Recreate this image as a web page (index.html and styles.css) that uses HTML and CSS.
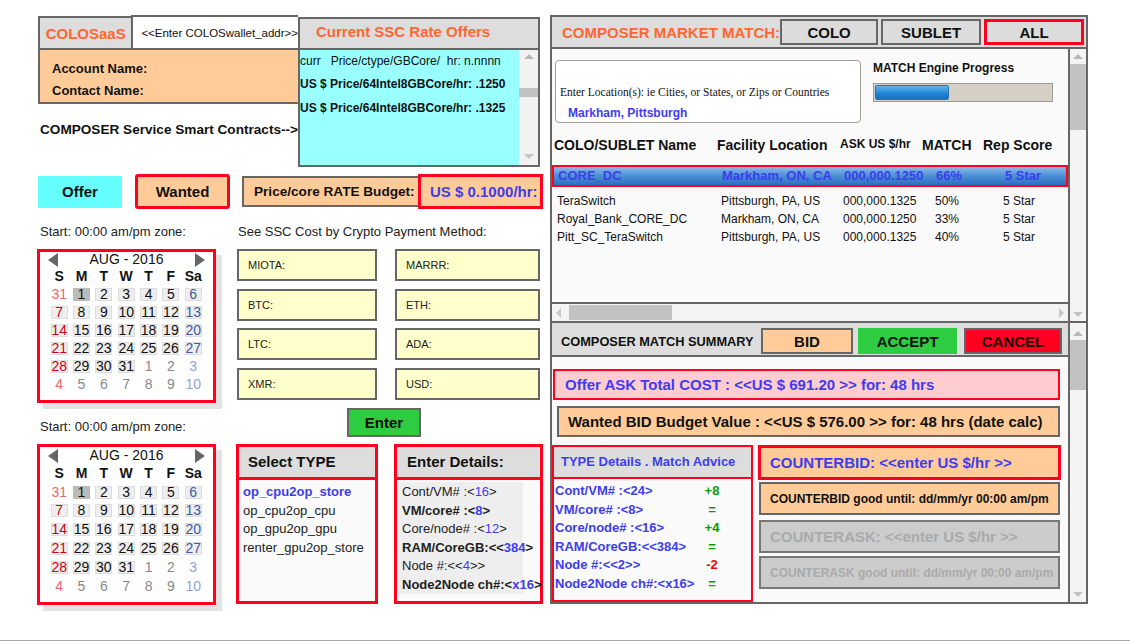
FILE: index.html
```html
<!DOCTYPE html>
<html lang="en">
<head>
<meta charset="utf-8">
<title>COLOSaaS Composer</title>
<link rel="stylesheet" href="styles.css">
</head>
<body>
<div class="page">
  <div class="left">
    <section class="row-top">
      <div class="acct">
        <div class="acct-head">
          <div class="brand">COLOSaaS</div>
          <div class="wallet">&lt;&lt;Enter COLOSwallet_addr&gt;&gt;</div>
        </div>
        <div class="acct-body">
          <div>Account Name:</div>
          <div>Contact Name:</div>
        </div>
        <div class="contracts">COMPOSER Service Smart Contracts--&gt;</div>
      </div>
      <div class="rates">
        <div class="rates-head">Current SSC Rate Offers</div>
        <div class="rates-body">
          <div class="rates-list">
            <div class="rate-line">curr   Price/ctype/GBCore/  hr: n.nnnn</div>
            <div class="rate-line strong">US $ Price/64Intel8GBCore/hr: .1250</div>
            <div class="rate-line strong">US $ Price/64Intel8GBCore/hr: .1325</div>
          </div>
          <div class="vscroll vs-rates">
            <span class="arr-up"></span>
            <span class="thumb"></span>
            <span class="arr-down"></span>
          </div>
        </div>
      </div>
    </section>

    <section class="row-mode">
      <div class="btn-offer">Offer</div>
      <div class="btn-wanted">Wanted</div>
      <div class="budget">
        <div class="budget-label">Price/core RATE Budget:</div>
        <div class="budget-value">US $ 0.1000/hr:</div>
      </div>
    </section>

    <section class="row-labels">
      <div class="lbl-start">Start: 00:00 am/pm zone:</div>
      <div>See SSC Cost by Crypto Payment Method:</div>
    </section>

    <section class="row-cal">
      <div class="cal">
        <div class="cal-head"><span class="tri-l"></span><span class="cal-title">AUG - 2016</span><span class="tri-r"></span></div>
        <div class="cal-grid">
          <span class="dn">S</span><span class="dn">M</span><span class="dn">T</span><span class="dn">W</span><span class="dn">T</span><span class="dn">F</span><span class="dn">Sa</span>
          <span class="d o su">31</span><span class="d today">1</span><span class="d b">2</span><span class="d b">3</span><span class="d b">4</span><span class="d b">5</span><span class="d b sa">6</span>
          <span class="d b su">7</span><span class="d b">8</span><span class="d b">9</span><span class="d b">10</span><span class="d b">11</span><span class="d b">12</span><span class="d b sa">13</span>
          <span class="d b su">14</span><span class="d b">15</span><span class="d b">16</span><span class="d b">17</span><span class="d b">18</span><span class="d b">19</span><span class="d b sa">20</span>
          <span class="d b su">21</span><span class="d b">22</span><span class="d b">23</span><span class="d b">24</span><span class="d b">25</span><span class="d b">26</span><span class="d b sa">27</span>
          <span class="d b su">28</span><span class="d b">29</span><span class="d b">30</span><span class="d b">31</span><span class="d o">1</span><span class="d o">2</span><span class="d o sa">3</span>
          <span class="d o su">4</span><span class="d o">5</span><span class="d o">6</span><span class="d o">7</span><span class="d o">8</span><span class="d o">9</span><span class="d o sa">10</span>
        </div>
      </div>
      <div class="crypto">
        <div class="coin">MIOTA:</div><div class="coin">MARRR:</div>
        <div class="coin">BTC:</div><div class="coin">ETH:</div>
        <div class="coin">LTC:</div><div class="coin">ADA:</div>
        <div class="coin">XMR:</div><div class="coin">USD:</div>
      </div>
    </section>

    <section class="row-enter">
      <div class="lbl-start2">Start: 00:00 am/pm zone:</div>
      <div class="btn-enter">Enter</div>
    </section>

    <section class="row-bottom">
      <div class="cal cal-lg">
        <div class="cal-head"><span class="tri-l"></span><span class="cal-title">AUG - 2016</span><span class="tri-r"></span></div>
        <div class="cal-grid">
          <span class="dn">S</span><span class="dn">M</span><span class="dn">T</span><span class="dn">W</span><span class="dn">T</span><span class="dn">F</span><span class="dn">Sa</span>
          <span class="d o su">31</span><span class="d today">1</span><span class="d b">2</span><span class="d b">3</span><span class="d b">4</span><span class="d b">5</span><span class="d b sa">6</span>
          <span class="d b su">7</span><span class="d b">8</span><span class="d b">9</span><span class="d b">10</span><span class="d b">11</span><span class="d b">12</span><span class="d b sa">13</span>
          <span class="d b su">14</span><span class="d b">15</span><span class="d b">16</span><span class="d b">17</span><span class="d b">18</span><span class="d b">19</span><span class="d b sa">20</span>
          <span class="d b su">21</span><span class="d b">22</span><span class="d b">23</span><span class="d b">24</span><span class="d b">25</span><span class="d b">26</span><span class="d b sa">27</span>
          <span class="d b su">28</span><span class="d b">29</span><span class="d b">30</span><span class="d b">31</span><span class="d o">1</span><span class="d o">2</span><span class="d o sa">3</span>
          <span class="d o su">4</span><span class="d o">5</span><span class="d o">6</span><span class="d o">7</span><span class="d o">8</span><span class="d o">9</span><span class="d o sa">10</span>
        </div>
      </div>
      <div class="listbox type-box">
        <div class="listbox-head">Select TYPE</div>
        <div class="listbox-body">
          <div class="opt sel">op_cpu2op_store</div>
          <div class="opt">op_cpu2op_cpu</div>
          <div class="opt">op_gpu2op_gpu</div>
          <div class="opt">renter_gpu2op_store</div>
        </div>
      </div>
      <div class="listbox details-box">
        <div class="listbox-head">Enter Details:</div>
        <div class="listbox-body">
          <div class="details-panel">
            <div class="opt">Cont/VM# :&lt;<span class="n">16</span>&gt;</div>
            <div class="opt strong">VM/core# :&lt;<span class="n">8</span>&gt;</div>
            <div class="opt">Core/node# :&lt;<span class="n">12</span>&gt;</div>
            <div class="opt strong">RAM/CoreGB:&lt;&lt;<span class="n">384</span>&gt;</div>
            <div class="opt">Node #:&lt;&lt;<span class="n">4</span>&gt;&gt;</div>
            <div class="opt strong">Node2Node ch#:&lt;<span class="n">x16</span>&gt;</div>
          </div>
        </div>
      </div>
    </section>
  </div>

  <div class="panel">
    <div class="mm-head">
      <div class="mm-title">COMPOSER MARKET MATCH:</div>
      <div class="seg">
        <div class="seg-btn w98">COLO</div>
        <div class="seg-btn">SUBLET</div>
        <div class="seg-btn active">ALL</div>
      </div>
    </div>

    <div class="mm-upper">
      <div class="mm-main">
        <div class="mm-content">
          <div class="search-row">
            <div class="loc-box">
              <div class="loc-hint">Enter Location(s): ie Cities, or States, or Zips or Countries</div>
              <div class="loc-val">Markham, Pittsburgh</div>
            </div>
            <div class="progress">
              <div class="progress-label">MATCH Engine Progress</div>
              <div class="progress-bar"><div class="progress-fill" style="width:74px"></div></div>
            </div>
          </div>
          <div class="th">
            <div>COLO/SUBLET Name</div><div>Facility Location</div><div class="th-ask">ASK US $/hr</div><div>MATCH</div><div>Rep Score</div>
          </div>
          <div class="tr-sel">
            <div>CORE_DC</div><div>Markham, ON, CA</div><div>000,000.1250</div><div>66%</div><div>5 Star</div>
          </div>
          <div class="rows">
            <div class="tr"><div>TeraSwitch</div><div>Pittsburgh, PA, US</div><div>000,000.1325</div><div>50%</div><div>5 Star</div></div>
            <div class="tr"><div>Royal_Bank_CORE_DC</div><div>Markham, ON, CA</div><div>000,000.1250</div><div>33%</div><div>5 Star</div></div>
            <div class="tr"><div>Pitt_SC_TeraSwitch</div><div>Pittsburgh, PA, US</div><div>000,000.1325</div><div>40%</div><div>5 Star</div></div>
          </div>
        </div>
        <div class="hscroll">
          <span class="arr-left"></span>
          <span class="hthumb"></span>
          <span class="arr-right"></span>
        </div>
      </div>
      <div class="vscroll vs-upper">
        <span class="arr-up"></span>
        <span class="thumb"></span>
        <span class="arr-down"></span>
      </div>
    </div>

    <div class="mm-lower">
      <div class="mm-main">
        <div class="sum-head">
          <div class="sum-title">COMPOSER MATCH SUMMARY</div>
          <div class="sum-btns">
            <div class="btn-bid">BID</div>
            <div class="btn-accept">ACCEPT</div>
            <div class="btn-cancel">CANCEL</div>
          </div>
        </div>
        <div class="sum-content">
          <div class="ask-total">Offer ASK Total COST : &lt;&lt;US $ 691.20 &gt;&gt; for: 48 hrs</div>
          <div class="bid-value">Wanted BID Budget Value : &lt;&lt;US $ 576.00 &gt;&gt; for: 48 hrs (date calc)</div>
          <div class="sum-split">
            <div class="advice">
              <div class="advice-head">TYPE Details . Match Advice</div>
              <div class="advice-body">
                <div>Cont/VM# :&lt;24&gt;</div><div class="delta">+8</div>
                <div>VM/core# :&lt;8&gt;</div><div class="delta">=</div>
                <div>Core/node# :&lt;16&gt;</div><div class="delta">+4</div>
                <div>RAM/CoreGB:&lt;&lt;384&gt;</div><div class="delta">=</div>
                <div>Node #:&lt;&lt;2&gt;&gt;</div><div class="delta neg">-2</div>
                <div>Node2Node ch#:&lt;x16&gt;</div><div class="delta">=</div>
              </div>
            </div>
            <div class="counters">
              <div class="cb">COUNTERBID: &lt;&lt;enter US $/hr &gt;&gt;</div>
              <div class="cb-until">COUNTERBID good until: dd/mm/yr 00:00 am/pm</div>
              <div class="ca">COUNTERASK: &lt;&lt;enter US $/hr &gt;&gt;</div>
              <div class="ca-until">COUNTERASK good until: dd/mm/yr 00:00 am/pm</div>
            </div>
          </div>
        </div>
      </div>
      <div class="vscroll vs-lower">
        <span class="arr-up"></span>
        <span class="thumb"></span>
        <span class="arr-down"></span>
      </div>
    </div>
  </div>
</div>
</body>
</html>
```

FILE: styles.css
```css
* { box-sizing: border-box; }

body {
  margin: 0;
  background: #ffffff;
  font-family: "Liberation Sans", Arial, Helvetica, sans-serif;
  color: #111111;
}

.page {
  height: 641px;
  border-bottom: 1px solid #aaaaaa;
  padding: 15px 0 0 37px;
  display: flex;
  align-items: flex-start;
}

/* ---------- LEFT COLUMN ---------- */
.left {
  width: 506px;
  display: flex;
  flex-direction: column;
}

.row-top {
  display: flex;
  height: 152px;
}

.acct {
  margin-left: 1px;
  width: 260px;
}

.acct-head {
  display: flex;
  height: 33px;
}

.brand {
  width: 99px;
  margin-top: 1px;
  border-top: 2px solid #666;
  border-left: 2px solid #666;
  background: #dddddd;
  color: #ff6633;
  font-weight: bold;
  font-size: 15px;
  display: flex;
  align-items: center;
  justify-content: center;
}

.wallet {
  flex: 1;
  border-top: 2px solid #666;
  border-left: 2px solid #666;
  background: #ffffff;
  font-size: 11.5px;
  padding-left: 8px;
  display: flex;
  align-items: center;
  white-space: nowrap;
}

.acct-body {
  height: 56px;
  background: #ffcc99;
  border: 2px solid #666;
  border-right: none;
  padding: 8px 0 0 12px;
  font-weight: bold;
  font-size: 13px;
  line-height: 22px;
}

.contracts {
  margin-top: 17px;
  padding-left: 2px;
  line-height: 18px;
  font-weight: bold;
  font-size: 13.6px;
  white-space: nowrap;
}

.rates {
  margin-top: 2px;
  width: 242px;
  height: 150px;
  border: 2px solid #666;
  display: flex;
  flex-direction: column;
}

.rates-head {
  height: 31px;
  background: #dddddd;
  border-bottom: 2px solid #666;
  color: #ff6633;
  font-weight: bold;
  font-size: 15px;
  line-height: 25px;
  padding-left: 16px;
}

.rates-body {
  flex: 1;
  display: flex;
}

.rates-list {
  flex: 1;
  background: #99ffff;
}

.rate-line {
  font-size: 12px;
  line-height: 23.3px;
  white-space: pre;
}

.strong { font-weight: bold; }

/* scrollbars */
.vscroll {
  width: 18px;
  border-left: 2px solid #666;
  background: #f4f4f4;
  display: flex;
  flex-direction: column;
  align-items: center;
}

.vs-rates {
  width: 19px;
  border-left: none;
  background: #f2f2f2;
}

.arr-up {
  width: 0;
  height: 0;
  border-left: 5px solid transparent;
  border-right: 5px solid transparent;
  border-bottom: 5px solid #b8b8b8;
}

.arr-down {
  width: 0;
  height: 0;
  border-left: 5px solid transparent;
  border-right: 5px solid transparent;
  border-top: 5px solid #c4c4c4;
  margin-top: auto;
}

.thumb {
  width: 100%;
  background: #c2c2c2;
}

.vs-rates .arr-up { margin-top: 4px; }
.vs-rates .thumb { margin-top: 29px; height: 9px; }
.vs-rates .arr-down { margin-bottom: 6px; }

.vs-upper .arr-up { margin-top: 5px; }
.vs-upper .thumb { margin-top: 5px; height: 66px; }
.vs-upper .arr-down { margin-bottom: 4px; }

.vs-lower .arr-up { margin-top: 8px; }
.vs-lower .thumb { margin-top: 4px; height: 50px; }
.vs-lower .arr-down { margin-bottom: 5px; }

/* offer / wanted row */
.row-mode {
  margin-top: 7px;
  height: 35px;
  display: flex;
  align-items: center;
}

.btn-offer {
  margin-left: 1px;
  width: 84px;
  height: 32px;
  background: #66ffff;
  font-weight: bold;
  font-size: 15px;
  display: flex;
  align-items: center;
  justify-content: center;
}

.btn-wanted {
  margin-left: 13px;
  width: 95px;
  height: 35px;
  border: 3px solid #ff0020;
  border-radius: 3px;
  background: #ffcc99;
  font-weight: bold;
  font-size: 15px;
  display: flex;
  align-items: center;
  justify-content: center;
}

.budget {
  margin-left: 12px;
  display: flex;
  align-items: center;
}

.budget-label {
  width: 176px;
  height: 31px;
  border: 2px solid #666;
  border-right: none;
  background: #ffcc99;
  padding-left: 10px;
  font-weight: bold;
  font-size: 13.6px;
  display: flex;
  align-items: center;
  white-space: nowrap;
}

.budget-value {
  width: 125px;
  height: 35px;
  border: 3px solid #ff0020;
  background: #ffcc99;
  color: #3d3ded;
  padding-left: 9px;
  font-weight: bold;
  font-size: 15px;
  display: flex;
  align-items: center;
  white-space: nowrap;
}

.row-labels {
  margin-top: 15px;
  display: flex;
  font-size: 13px;
  line-height: 15px;
  color: #222;
}

.lbl-start {
  width: 201px;
  padding-left: 3px;
}

/* calendar + crypto */
.row-cal {
  margin-top: 10px;
  display: flex;
  align-items: flex-start;
}

.cal {
  width: 179px;
  border: 3px solid #ff0020;
  background: #ffffff;
  box-shadow: 6px 6px 0 #e3e3e3;
  padding: 0 8px 7px 8px;
}

.cal-head {
  height: 15px;
  display: flex;
  align-items: center;
  justify-content: space-between;
  width: 157px;
}

.cal-title {
  font-size: 14px;
  line-height: 15px;
}

.tri-l {
  width: 0;
  height: 0;
  border-top: 7px solid transparent;
  border-bottom: 7px solid transparent;
  border-right: 10px solid #666;
}

.tri-r {
  width: 0;
  height: 0;
  border-top: 7px solid transparent;
  border-bottom: 7px solid transparent;
  border-left: 10px solid #666;
}

.cal-grid {
  display: grid;
  grid-template-columns: repeat(7, 22.35px);
  grid-auto-rows: 18px;
  align-items: center;
  justify-items: center;
  font-size: 14px;
}

.cal-lg { padding-bottom: 6px; }
.cal-lg .cal-head { height: 17px; }
.cal-lg .cal-grid { grid-auto-rows: 18.8px; }

.dn { font-weight: bold; color: #111; }

.d {
  display: block;
  min-width: 17px;
  height: 13px;
  line-height: 13px;
  text-align: center;
  color: #111;
}

.d.b {
  background: #eeeeee;
  box-shadow: inset 0 0 0 1px #dddddd;
}

.d.today { background: #bbbbbb; }

.su { color: #cc0011; }
.sa { color: #3a5bab; }
.d.o { color: #888888; }
.d.o.su { color: #e46a6a; }
.d.o.sa { color: #8fa2dc; }
.d.su { color: #cc0011; }
.d.sa { color: #3a5bab; }

.crypto {
  margin-left: 21px;
  display: grid;
  grid-template-columns: 140px 145px;
  column-gap: 18px;
  row-gap: 7.7px;
}

.coin {
  height: 32px;
  border: 2px solid #666;
  background: #ffffcc;
  font-size: 11px;
  color: #222;
  padding-left: 9px;
  display: flex;
  align-items: center;
}

/* enter row */
.row-enter {
  margin-top: 5px;
  display: flex;
  height: 29px;
}

.lbl-start2 {
  width: 310px;
  padding-left: 3px;
  margin-top: 11px;
  font-size: 13px;
  line-height: 15px;
  color: #222;
}

.btn-enter {
  width: 74px;
  height: 29px;
  background: #2ecc40;
  border: 2px solid #666;
  font-weight: bold;
  font-size: 15px;
  display: flex;
  align-items: center;
  justify-content: center;
}

/* bottom row */
.row-bottom {
  margin-top: 7px;
  display: flex;
  align-items: flex-start;
}

.listbox {
  height: 160px;
  border: 3px solid #ff0020;
  background: #fafafa;
}

.type-box { margin-left: 20px; width: 142px; }
.details-box { margin-left: 16px; width: 149px; }

.listbox-head {
  height: 33px;
  background: #dddddd;
  border-bottom: 3px solid #ff0020;
  font-weight: bold;
  font-size: 15px;
  line-height: 30px;
  padding-left: 9px;
}

.details-box .listbox-head { padding-left: 10px; }

.listbox-body {
  padding-top: 3px;
  font-size: 13px;
  line-height: 18.5px;
  color: #222;
}

.details-box .listbox-body { padding-top: 2px; }

.opt {
  padding-left: 4px;
  white-space: nowrap;
}

.opt.sel {
  color: #3d3ded;
  font-weight: bold;
}

.details-panel {
  width: 126px;
  background: #eeeeee;
  padding-top: 1px;
}

.details-panel .opt { padding-left: 5px; }

.n { color: #3d3ded; }

/* ---------- RIGHT PANEL ---------- */
.panel {
  margin-left: 7px;
  width: 538px;
  height: 589px;
  border: 2px solid #666;
  background: #fafafa;
  display: flex;
  flex-direction: column;
}

.mm-head {
  height: 32px;
  background: #dddddd;
  border-bottom: 2px solid #666;
  display: flex;
  align-items: center;
}

.mm-title {
  flex: 1;
  padding-left: 10px;
  color: #ff6633;
  font-weight: bold;
  font-size: 15px;
  white-space: nowrap;
}

.seg {
  display: flex;
  gap: 3px;
  margin-right: 2px;
}

.seg-btn {
  width: 100px;
  height: 26px;
  border: 2px solid #666;
  background: #dcdcdc;
  font-weight: bold;
  font-size: 15px;
  display: flex;
  align-items: center;
  justify-content: center;
}

.seg-btn.w98 { width: 98px; }
.seg-btn.active { border: 3px solid #ff0020; }

.mm-upper {
  height: 272px;
  display: flex;
}

.mm-main {
  flex: 1;
  display: flex;
  flex-direction: column;
}

.mm-content {
  flex: 1;
  padding-top: 11px;
}

.search-row {
  display: flex;
  align-items: flex-start;
}

.loc-box {
  margin-left: 3px;
  width: 306px;
  height: 63px;
  border: 1px solid #a89f94;
  border-radius: 4px;
  background: #ffffff;
  padding: 23px 0 0 4px;
}

.loc-hint {
  font-family: "Liberation Serif", "Times New Roman", serif;
  font-size: 11.5px;
  line-height: 16px;
  white-space: nowrap;
}

.loc-val {
  margin-top: 4px;
  padding-left: 8px;
  line-height: 18px;
  font-weight: bold;
  font-size: 12px;
  color: #3d3ded;
}

.progress {
  margin-left: 12px;
  width: 180px;
}

.progress-label {
  font-weight: bold;
  font-size: 12px;
  line-height: 16px;
  white-space: nowrap;
}

.progress-bar {
  margin-top: 7px;
  height: 19px;
  border: 1px solid #a09a92;
  background: #d6cfc6;
  padding: 1px;
}

.progress-fill {
  height: 100%;
  background: linear-gradient(#64b6ee, #2188d6 55%, #1570c0);
  border: 1px solid #2a6fb0;
  border-radius: 2px;
}

.th {
  margin-top: 12px;
  padding-left: 2px;
  display: grid;
  grid-template-columns: 163px 123px 82px 61px 1fr;
  line-height: 20px;
  font-weight: bold;
  font-size: 14px;
  white-space: nowrap;
}

.th-ask { font-size: 12px; line-height: 18px; }

.tr-sel {
  margin-top: 10px;
  height: 22px;
  border: 2px solid #ff0020;
  background: linear-gradient(#8dbbe8, #4a8fd6 50%, #2c6fbf);
  color: #3d3ded;
  font-weight: bold;
  font-size: 13px;
  padding-left: 4px;
  display: grid;
  grid-template-columns: 164px 122px 92px 69px 1fr;
  align-items: center;
  line-height: 18px;
  white-space: nowrap;
}

.rows { margin-top: 5px; }

.tr {
  padding-left: 5px;
  display: grid;
  grid-template-columns: 164px 122px 92px 68px 1fr;
  font-size: 12px;
  line-height: 18px;
  white-space: nowrap;
}

.hscroll {
  height: 19px;
  border-top: 2px solid #666;
  background: #f4f4f4;
  display: flex;
  align-items: center;
}

.arr-left {
  margin-left: 4px;
  width: 0;
  height: 0;
  border-top: 5px solid transparent;
  border-bottom: 5px solid transparent;
  border-right: 5px solid #c8c8c8;
}

.arr-right {
  margin-left: auto;
  margin-right: 4px;
  width: 0;
  height: 0;
  border-top: 5px solid transparent;
  border-bottom: 5px solid transparent;
  border-left: 5px solid #c8c8c8;
}

.hthumb {
  margin-left: 8px;
  width: 103px;
  height: 15px;
  background: #c2c2c2;
}

/* lower */
.mm-lower {
  flex: 1;
  border-top: 2px solid #666;
  display: flex;
}

.sum-head {
  height: 34px;
  padding-top: 4px;
  background: #dddddd;
  border-bottom: 2px solid #666;
  display: flex;
  align-items: center;
}

.sum-title {
  flex: 1;
  padding-left: 9px;
  font-weight: bold;
  font-size: 12.8px;
  white-space: nowrap;
}

.sum-btns {
  display: flex;
  margin-right: 6px;
}

.btn-bid, .btn-accept, .btn-cancel {
  height: 26px;
  font-weight: bold;
  font-size: 15px;
  display: flex;
  align-items: center;
  justify-content: center;
}

.btn-bid {
  width: 92px;
  border: 2px solid #666;
  background: #ffcc99;
}

.btn-accept {
  margin-left: 5px;
  width: 99px;
  background: #2ecc40;
}

.btn-cancel {
  margin-left: 7px;
  width: 98px;
  border: 2px solid #666;
  background: #ff0020;
  color: #220000;
}

.sum-content {
  flex: 1;
  padding-top: 12px;
  display: flex;
  flex-direction: column;
}

.ask-total {
  margin-left: 1px;
  width: 507px;
  height: 31px;
  border: 2px solid #ff0020;
  background: #ffccd0;
  color: #3d3ded;
  font-weight: bold;
  font-size: 15px;
  padding-left: 10px;
  display: flex;
  align-items: center;
  white-space: nowrap;
}

.bid-value {
  margin-top: 6px;
  margin-left: 5px;
  width: 503px;
  height: 31px;
  border: 2px solid #666;
  background: #ffcc99;
  font-weight: bold;
  font-size: 15px;
  padding-left: 9px;
  display: flex;
  align-items: center;
  white-space: nowrap;
}

.sum-split {
  margin-top: 8px;
  flex: 1;
  display: flex;
}

.advice {
  width: 201px;
  border: 2px solid #ff0020;
  background: #fafafa;
}

.advice-head {
  height: 32px;
  background: #dddddd;
  border-bottom: 2px solid #ff0020;
  color: #3d3ded;
  font-weight: bold;
  font-size: 13px;
  line-height: 30px;
  padding-left: 7px;
  white-space: nowrap;
}

.advice-body {
  padding: 3px 27px 0 1px;
  display: grid;
  grid-template-columns: 1fr 24px;
  line-height: 18.6px;
  font-weight: bold;
  font-size: 13px;
  color: #3d3ded;
  white-space: nowrap;
}

.delta {
  text-align: center;
  color: #0a9a0a;
}

.delta.neg { color: #ff0000; }

.counters {
  margin-left: 5px;
  width: 303px;
  display: flex;
  flex-direction: column;
}

.cb, .cb-until, .ca, .ca-until {
  display: flex;
  align-items: center;
  font-weight: bold;
  white-space: nowrap;
}

.cb {
  height: 35px;
  border: 3px solid #ff0020;
  background: #ffcc99;
  color: #3d3ded;
  font-size: 15px;
  padding-left: 9px;
}

.cb-until {
  margin-top: 2px;
  margin-left: 1px;
  width: 301px;
  height: 33px;
  border: 2px solid #666;
  background: #ffcc99;
  font-size: 12px;
  padding-left: 9px;
}

.ca {
  margin-top: 5px;
  margin-left: 1px;
  width: 301px;
  height: 33px;
  border: 2px solid #777;
  background: #cccccc;
  color: #aaaaaa;
  font-size: 15px;
  padding-left: 9px;
}

.ca-until {
  margin-top: 3px;
  margin-left: 1px;
  width: 301px;
  height: 33px;
  border: 2px solid #777;
  background: #cccccc;
  color: #aaaaaa;
  font-size: 12px;
  padding-left: 9px;
}
```
